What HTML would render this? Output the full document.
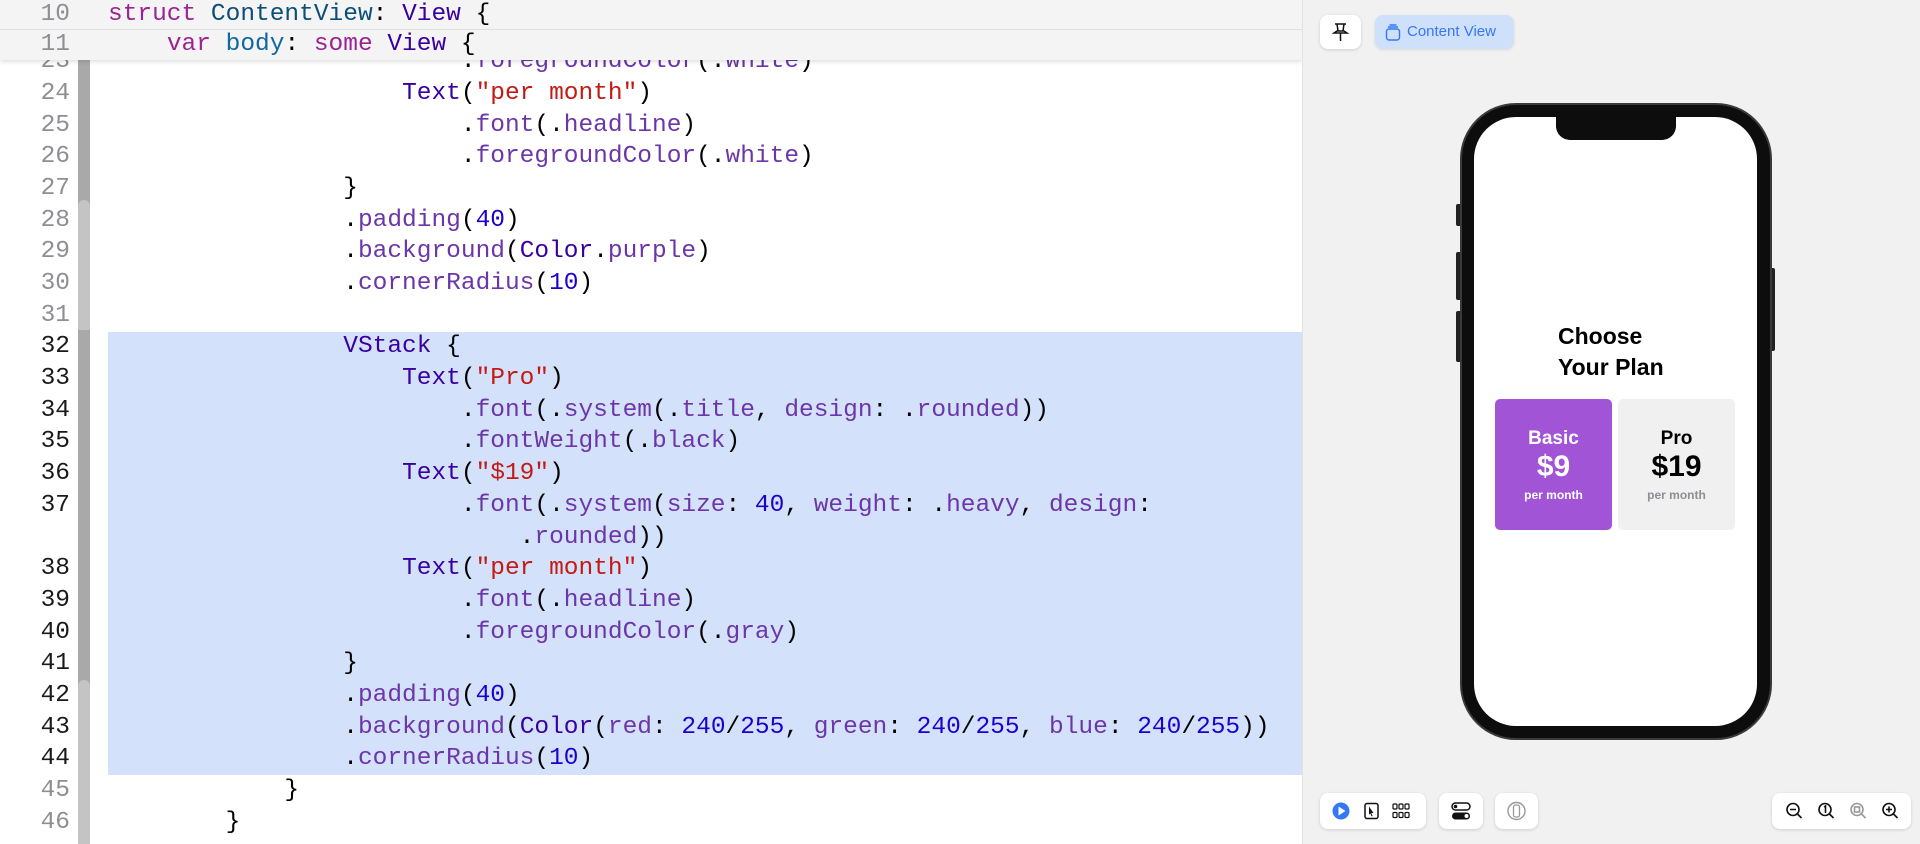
<!DOCTYPE html>
<html><head><meta charset="utf-8">
<style>
*{margin:0;padding:0;box-sizing:border-box}
body{width:1920px;height:844px;overflow:hidden;background:#fff;position:relative;font-family:"Liberation Sans",sans-serif}
.code{position:absolute;left:0;top:46.2px;width:1302px;font-family:"Liberation Mono",monospace;font-size:24.5px;line-height:31.7px;color:#000}
.row{position:relative;height:31.7px;white-space:pre}
.ln{position:absolute;left:0;width:70px;text-align:right;color:#8e8e93}
.sel .ln{color:#1a1a1a}
.tx{position:absolute;left:108px}
.k{color:#9b2393}.t{color:#0b4f79}.v{color:#3900a0}.f{color:#6c36a9}.n{color:#1c00cf}.s{color:#c41a16}.d{color:#0f68a0}
.hdr{position:absolute;left:0;top:0;width:1302px;height:60px;background:#f5f4f4;box-shadow:0 2px 4px rgba(0,0,0,.12);z-index:5;font-family:"Liberation Mono",monospace;font-size:24.5px}
.hdr .row{position:absolute;left:0;width:100%;height:30px;line-height:30px}
.right{position:absolute;left:1302px;top:0;width:618px;height:844px;background:#f1f1f1;border-left:1px solid #e2e2e2;z-index:6}
.btn{position:absolute;background:#fff;border-radius:8px;box-shadow:0 1px 3px rgba(0,0,0,.15)}
</style></head><body>
<div style="position:absolute;left:108px;top:332px;width:1194px;height:443px;background:#d3e1fa"></div>
<div style="position:absolute;left:78px;top:60px;width:12px;height:784px;background:#a9a9a9"></div>
<div style="position:absolute;left:78px;top:200px;width:12px;height:130px;background:#c4c4c4;border-radius:6px 6px 0 0"></div>
<div style="position:absolute;left:78px;top:680px;width:12px;height:164px;background:#c4c4c4;border-radius:6px 6px 0 0"></div>
<div class="hdr">
<div class="row" style="top:0;border-bottom:1px solid #e0e0e0"><span class="ln" style="color:#8e8e93">10</span><span class="tx"><span class="k">struct</span> <span class="t">ContentView</span>: <span class="v">View</span> {</span></div>
<div class="row" style="top:30px"><span class="ln" style="color:#8e8e93">11</span><span class="tx">    <span class="k">var</span> <span class="d">body</span>: <span class="k">some</span> <span class="v">View</span> {</span></div>
</div>
<div class="code">
<div class="row"><span class="ln">23</span><span class="tx">                        .<span class="f">foregroundColor</span>(.<span class="f">white</span>)</span></div>
<div class="row"><span class="ln">24</span><span class="tx">                    <span class="v">Text</span>(<span class="s">"per month"</span>)</span></div>
<div class="row"><span class="ln">25</span><span class="tx">                        .<span class="f">font</span>(.<span class="f">headline</span>)</span></div>
<div class="row"><span class="ln">26</span><span class="tx">                        .<span class="f">foregroundColor</span>(.<span class="f">white</span>)</span></div>
<div class="row"><span class="ln">27</span><span class="tx">                }</span></div>
<div class="row"><span class="ln">28</span><span class="tx">                .<span class="f">padding</span>(<span class="n">40</span>)</span></div>
<div class="row"><span class="ln">29</span><span class="tx">                .<span class="f">background</span>(<span class="v">Color</span>.<span class="f">purple</span>)</span></div>
<div class="row"><span class="ln">30</span><span class="tx">                .<span class="f">cornerRadius</span>(<span class="n">10</span>)</span></div>
<div class="row"><span class="ln">31</span><span class="tx"></span></div>
<div class="row sel"><span class="ln">32</span><span class="tx">                <span class="v">VStack</span> {</span></div>
<div class="row sel"><span class="ln">33</span><span class="tx">                    <span class="v">Text</span>(<span class="s">"Pro"</span>)</span></div>
<div class="row sel"><span class="ln">34</span><span class="tx">                        .<span class="f">font</span>(.<span class="f">system</span>(.<span class="f">title</span>, <span class="f">design</span>: .<span class="f">rounded</span>))</span></div>
<div class="row sel"><span class="ln">35</span><span class="tx">                        .<span class="f">fontWeight</span>(.<span class="f">black</span>)</span></div>
<div class="row sel"><span class="ln">36</span><span class="tx">                    <span class="v">Text</span>(<span class="s">"$19"</span>)</span></div>
<div class="row sel"><span class="ln">37</span><span class="tx">                        .<span class="f">font</span>(.<span class="f">system</span>(<span class="f">size</span>: <span class="n">40</span>, <span class="f">weight</span>: .<span class="f">heavy</span>, <span class="f">design</span>:</span></div>
<div class="row sel"><span class="tx">                            .<span class="f">rounded</span>))</span></div>
<div class="row sel"><span class="ln">38</span><span class="tx">                    <span class="v">Text</span>(<span class="s">"per month"</span>)</span></div>
<div class="row sel"><span class="ln">39</span><span class="tx">                        .<span class="f">font</span>(.<span class="f">headline</span>)</span></div>
<div class="row sel"><span class="ln">40</span><span class="tx">                        .<span class="f">foregroundColor</span>(.<span class="f">gray</span>)</span></div>
<div class="row sel"><span class="ln">41</span><span class="tx">                }</span></div>
<div class="row sel"><span class="ln">42</span><span class="tx">                .<span class="f">padding</span>(<span class="n">40</span>)</span></div>
<div class="row sel"><span class="ln">43</span><span class="tx">                .<span class="f">background</span>(<span class="v">Color</span>(<span class="f">red</span>: <span class="n">240</span>/<span class="n">255</span>, <span class="f">green</span>: <span class="n">240</span>/<span class="n">255</span>, <span class="f">blue</span>: <span class="n">240</span>/<span class="n">255</span>))</span></div>
<div class="row sel"><span class="ln">44</span><span class="tx">                .<span class="f">cornerRadius</span>(<span class="n">10</span>)</span></div>
<div class="row"><span class="ln">45</span><span class="tx">            }</span></div>
<div class="row"><span class="ln">46</span><span class="tx">        }</span></div>
</div>

<div class="right">
<div class="btn" style="left:17px;top:15px;width:41px;height:34px">
<svg width="41" height="34" viewBox="0 0 41 34"><g fill="none" stroke="#111" stroke-width="1.5"><path d="M15 9h11M17 9l1 7M24 9l-1 7M14 18h13l-3-2h-7z"/><path d="M20.5 18v8"/></g></svg></div>
<div class="btn" style="left:72px;top:15px;width:139px;height:34px;background:#cfe0fb;box-shadow:0 1px 3px rgba(0,0,0,.1)">
<svg style="position:absolute;left:10px;top:9px" width="16" height="17" viewBox="0 0 16 17"><g fill="none" stroke="#3478f6" stroke-width="1.4"><rect x="1.5" y="5" width="13" height="11" rx="2.5"/><path d="M3 3h10M4.5 1h7"/></g></svg>
<span style="position:absolute;left:32px;top:8px;font-size:15px;color:#3478f6">Content View</span></div>

<div style="position:absolute;left:153px;top:204px;width:5px;height:22px;background:#222;border-radius:2px 0 0 2px"></div>
<div style="position:absolute;left:153px;top:252px;width:5px;height:48px;background:#222;border-radius:2px 0 0 2px"></div>
<div style="position:absolute;left:153px;top:311px;width:5px;height:51px;background:#222;border-radius:2px 0 0 2px"></div>
<div style="position:absolute;left:467px;top:268px;width:5px;height:83px;background:#222;border-radius:0 2px 2px 0"></div>
<div style="position:absolute;left:157px;top:103px;width:312px;height:637px;background:#0d0d0d;border-radius:56px;border:2px solid #3a3a3a"></div>
<div style="position:absolute;left:171px;top:117px;width:283px;height:609px;background:#fff;border-radius:42px;overflow:hidden">
<div style="position:absolute;left:82px;top:0;width:120px;height:23px;background:#0d0d0d;border-radius:0 0 14px 14px"></div>
<div style="position:absolute;left:84px;top:204px;font-size:23px;font-weight:bold;line-height:31px;color:#000">Choose<br>Your Plan</div>
<div style="position:absolute;left:21px;top:282px;width:117px;height:131px;background:#a155d6;border-radius:5px;color:#fff;text-align:center">
<div style="position:absolute;width:100%;top:29px;font-size:19px;font-weight:bold">Basic</div>
<div style="position:absolute;width:100%;top:51px;font-size:30px;font-weight:bold">$9</div>
<div style="position:absolute;width:100%;top:89px;font-size:12px;font-weight:bold">per month</div></div>
<div style="position:absolute;left:144px;top:282px;width:117px;height:131px;background:#f0f0f0;border-radius:5px;color:#000;text-align:center">
<div style="position:absolute;width:100%;top:29px;font-size:19px;font-weight:bold">Pro</div>
<div style="position:absolute;width:100%;top:51px;font-size:30px;font-weight:bold">$19</div>
<div style="position:absolute;width:100%;top:89px;font-size:12px;font-weight:bold;color:#8e8e93">per month</div></div>
</div>

<div class="btn" style="left:17px;top:793px;width:106px;height:36px">
<svg width="106" height="36" viewBox="0 0 106 36">
<circle cx="21" cy="18" r="8.5" fill="#3478f6"/><path d="M18.5 13.5v9l7-4.5z" fill="#fff"/>
<rect x="45" y="10.5" width="13" height="15" rx="2" fill="none" stroke="#111" stroke-width="1.5"/><path d="M49 13.5l4.5 6.5h-2.2l1.3 3-1 .4-1.3-3-1.3 1.2z" fill="#111"/>
<g fill="none" stroke="#111" stroke-width="1.2"><rect x="73" y="11" width="4" height="5" rx="1"/><rect x="79" y="11" width="4" height="5" rx="1"/><rect x="85" y="11" width="4" height="5" rx="1"/><rect x="73" y="19.5" width="4" height="5" rx="1"/><rect x="79" y="19.5" width="4" height="5" rx="1"/><rect x="85" y="19.5" width="4" height="5" rx="1"/></g>
</svg></div>
<div class="btn" style="left:136px;top:793px;width:44px;height:36px">
<svg width="44" height="36" viewBox="0 0 44 36"><rect x="13" y="10" width="18" height="7" rx="3.5" fill="none" stroke="#111" stroke-width="1.5"/><circle cx="16.5" cy="13.5" r="1.8" fill="#111"/><rect x="13" y="19.5" width="18" height="7" rx="3.5" fill="#111"/><circle cx="27.5" cy="23" r="2" fill="#fff"/></svg></div>
<div class="btn" style="left:192px;top:793px;width:43px;height:36px">
<svg width="43" height="36" viewBox="0 0 43 36"><circle cx="21.5" cy="18" r="8.5" fill="none" stroke="#999" stroke-width="1.4"/><rect x="18.5" y="12" width="6" height="12" rx="2" fill="none" stroke="#999" stroke-width="1.3"/></svg></div>
<div class="btn" style="left:469px;top:793px;width:139px;height:36px">
<svg width="139" height="36" viewBox="0 0 139 36"><g fill="none" stroke="#111" stroke-width="1.6">
<circle cx="21" cy="16.5" r="6"/><path d="M25.5 21l4 4M18 16.5h6"/>
<circle cx="53" cy="16.5" r="6"/><path d="M57.5 21l4 4M52 14l1.5-1v7"/>
</g><g fill="none" stroke="#999" stroke-width="1.6"><circle cx="85" cy="16.5" r="6"/><path d="M89.5 21l4 4"/><rect x="82.5" y="14" width="5" height="5"/></g>
<g fill="none" stroke="#111" stroke-width="1.6"><circle cx="117" cy="16.5" r="6"/><path d="M121.5 21l4 4M114 16.5h6M117 13.5v6"/></g></svg></div>
</div>
</body></html>
